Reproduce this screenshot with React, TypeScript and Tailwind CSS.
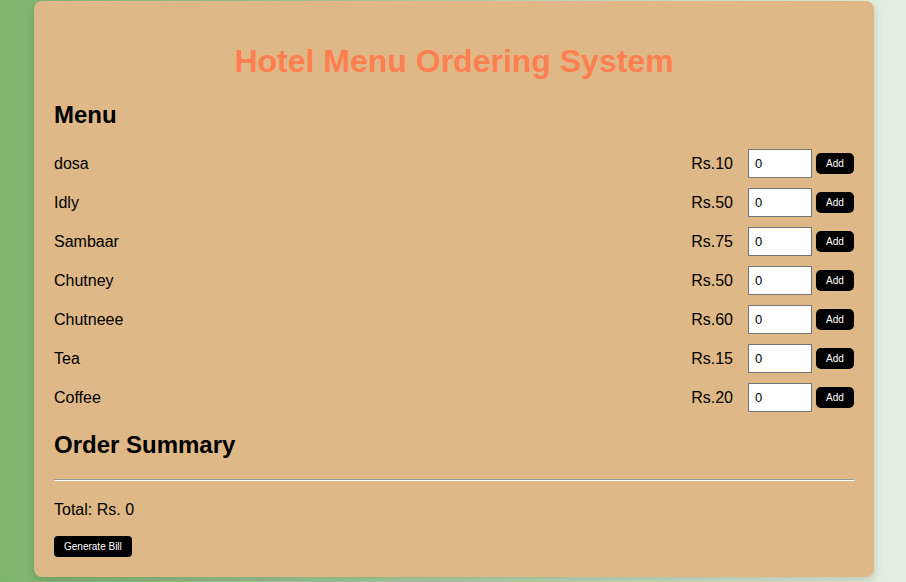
const items = [
  { name: 'dosa', price: 10 },
  { name: 'Idly', price: 50 },
  { name: 'Sambaar', price: 75 },
  { name: 'Chutney', price: 50 },
  { name: 'Chutneee', price: 60 },
  { name: 'Tea', price: 15 },
  { name: 'Coffee', price: 20 },
];

export default function App() {
  return (
    <div className="min-h-screen bg-gradient-to-r from-[#7db46e] to-[#e4f0e1] pt-px font-['Liberation_Sans',Arial,sans-serif] text-black">
      <div className="ml-[34px] w-[840px] rounded-lg bg-[#deb887] p-5 shadow-[0_4px_10px_rgba(0,0,0,0.15)]">
        <h1 className="mt-[22px] text-center text-[32px] font-bold leading-[37px] text-[#ff7f50]">
          Hotel Menu Ordering System
        </h1>
        <h2 className="mt-[21px] text-2xl font-bold leading-[27px]">Menu</h2>
        <div className="mt-[21px] flex flex-col gap-[10px]">
          {items.map((item) => (
            <MenuRow key={item.name} name={item.name} price={item.price} />
          ))}
        </div>
        <h2 className="mt-[19px] text-2xl font-bold leading-[27px]">Order Summary</h2>
        <div className="mt-[21px] h-[2px] border-t border-b border-t-[#9a9a9a] border-b-white" />
        <p className="mt-[20px] text-base leading-[18px]">Total: Rs. 0</p>
        <button className="mt-[17px] block h-[21px] rounded-[4px] bg-black px-[10px] text-[10px] leading-[21px] text-white">
          Generate Bill
        </button>
      </div>
    </div>
  );
}

function MenuRow({ name, price }: { name: string; price: number }) {
  return (
    <div className="flex h-[29px] items-center">
      <span className="flex-1 text-base">{name}</span>
      <span className="text-base">Rs.{price}</span>
      <input
        type="number"
        defaultValue={0}
        className="ml-[15px] h-[29px] w-[64px] border border-[#767676] bg-white px-[6px] text-[13px] text-black"
      />
      <button className="ml-[4px] h-[21px] w-[38px] rounded-[5px] bg-black text-[10px] leading-[21px] text-white">
        Add
      </button>
    </div>
  );
}
